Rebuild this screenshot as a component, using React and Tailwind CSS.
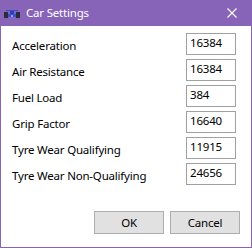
import React from "react";

const rows = [
  ["Acceleration", "16384"],
  ["Air Resistance", "16384"],
  ["Fuel Load", "384"],
  ["Grip Factor", "16640"],
  ["Tyre Wear Qualifying", "11915"],
  ["Tyre Wear Non-Qualifying", "24656"],
];

const CarIcon = () => (
  <svg width="16" height="8" viewBox="0 0 16 8">
    <rect x="0" y="2" width="4" height="6" fill="#2b2b3a" />
    <rect x="12" y="2" width="4" height="6" fill="#2b2b3a" />
    <rect x="4" y="4" width="8" height="3" fill="#3a4fd0" />
    <rect x="6" y="1" width="4" height="3" fill="#2f3fb0" />
    <rect x="2" y="0" width="12" height="1" fill="#3a4fd0" />
    <rect x="7" y="5" width="2" height="2" fill="#8fa0ff" />
  </svg>
);

export default function App() {
  return (
    <div
      className="w-[252px] h-[248px] flex flex-col bg-white border-x border-b border-[#8764b8] tracking-[-0.2px]"
      style={{ fontFamily: '"Noto Sans", sans-serif' }}
    >
      <div className="h-[26px] shrink-0 bg-[#8764b8] flex items-center -mx-px px-[4px] text-white">
        <div className="w-[18px] flex items-center pt-[2px]">
          <CarIcon />
        </div>
        <span className="ml-[4px] text-[11.5px] leading-none">Car Settings</span>
        <svg className="ml-auto mr-[11px]" width="10" height="10" viewBox="0 0 10 10">
          <path d="M0.5 0.5 L9.5 9.5 M9.5 0.5 L0.5 9.5" stroke="white" strokeWidth="1.1" />
        </svg>
      </div>
      <div className="flex flex-col gap-[4px] pt-[7px] pl-[11px] pr-[15px]">
        {rows.map(([label, value]) => (
          <div key={label} className="flex items-center h-[22px]">
            <span className="text-[11.5px] text-black pt-[3px]">{label}</span>
            <div className="ml-auto w-[50px] h-[22px] border border-[#a0a0a0] px-[3px] text-[11.5px] leading-[18px] text-black">
              {value}
            </div>
          </div>
        ))}
      </div>
      <div className="mt-auto flex justify-end gap-[6px] pr-[11px] pb-[13px]">
        <button className="w-[70px] h-[23px] bg-[#e1e1e1] border border-[#adadad] text-[11.5px] text-black">
          OK
        </button>
        <button className="w-[70px] h-[23px] bg-[#e1e1e1] border border-[#adadad] text-[11.5px] text-black">
          Cancel
        </button>
      </div>
    </div>
  );
}
